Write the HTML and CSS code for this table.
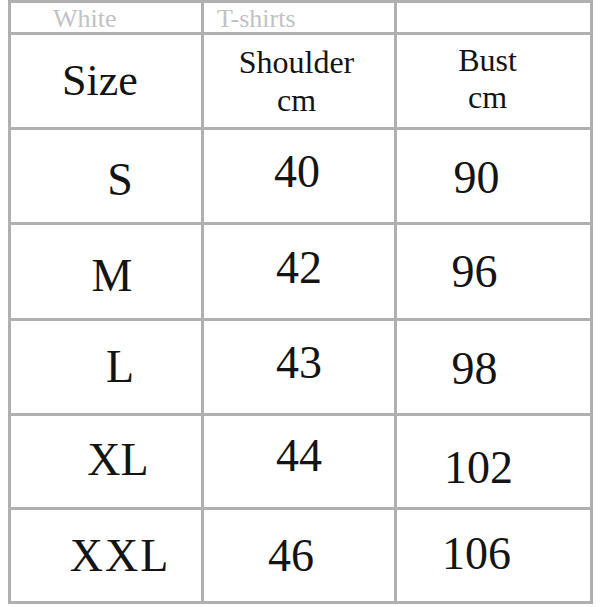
FILE: index.html
```html
<!DOCTYPE html>
<html>
<head>
<meta charset="utf-8">
<link rel="stylesheet" href="styles.css">
</head>
<body>
<div class="chart">
  <div class="cell top"><span class="note note-white">White</span></div>
  <div class="cell top"><span class="note note-tee">T-shirts</span></div>
  <div class="cell top"></div>

  <div class="cell center"><span class="size-head">Size</span></div>
  <div class="cell center"><div class="head shoulder">Shoulder<br>cm</div></div>
  <div class="cell center"><div class="head bust">Bust<br>cm</div></div>

  <div class="cell center c1"><span class="val rt2 dn4">S</span></div>
  <div class="cell center"><span class="val lt2 up4">40</span></div>
  <div class="cell center c3"><span class="val dn2">90</span></div>

  <div class="cell center c1"><span class="val lt6 dn4">M</span></div>
  <div class="cell center"><span class="val up4">42</span></div>
  <div class="cell center c3"><span class="val lt2">96</span></div>

  <div class="cell center c1"><span class="val rt2">L</span></div>
  <div class="cell center"><span class="val up4">43</span></div>
  <div class="cell center c3"><span class="val lt2 dn2">98</span></div>

  <div class="cell center c1"><span class="val up2">XL</span></div>
  <div class="cell center"><span class="val up6">44</span></div>
  <div class="cell center c3"><span class="val rt2 dn6">102</span></div>

  <div class="cell center c1"><span class="val wide rt2">XXL</span></div>
  <div class="cell center"><span class="val lt8">46</span></div>
  <div class="cell center c3"><span class="val up2">106</span></div>
</div>
</body>
</html>
```
FILE: styles.css
```css
html, body {
  margin: 0;
  padding: 0;
  background: #ffffff;
}
body {
  width: 600px;
  height: 607px;
  overflow: hidden;
}
.chart {
  margin-left: 8px;
  width: 579px;
  display: grid;
  grid-template-columns: 190px 190px 193px;
  grid-template-rows: 29px 92px 92px 93px 92px 91px 91px;
  gap: 3px;
  padding: 3px;
  background: #b0b0b0;
  font-family: "Liberation Serif", serif;
  color: #141414;
}
.cell {
  background: #ffffff;
  overflow: hidden;
  font-family: "Liberation Serif", serif;
}
.top {
  display: flex;
  align-items: center;
}
.note {
  color: #c2c2c2;
  font-size: 26px;
  line-height: 1;
  margin-top: 2px;
}
.note-white { padding-left: 42px; }
.note-tee { padding-left: 13px; }
.center {
  display: flex;
  align-items: center;
  justify-content: center;
}
.c1 { padding-left: 24px; }
.c3 { padding-right: 34px; }
.size-head {
  font-size: 44px;
  line-height: 1;
  margin-right: 12px;
}
.head {
  text-align: center;
  font-size: 32px;
}
.shoulder {
  line-height: 38px;
  margin-right: 5px;
}
.bust {
  line-height: 37px;
  margin-right: 12px;
  margin-bottom: 4px;
}
.val {
  font-size: 46px;
  line-height: 1;
}
.wide { letter-spacing: 2px; }
.dn2 { margin-top: 4px; }
.dn4 { margin-top: 8px; }
.dn6 { margin-top: 12px; }
.up2 { margin-bottom: 4px; }
.up4 { margin-bottom: 8px; }
.up6 { margin-bottom: 12px; }
.lt2 { margin-right: 4px; }
.lt6 { margin-right: 12px; }
.lt8 { margin-right: 16px; }
.rt2 { margin-left: 4px; }
```
